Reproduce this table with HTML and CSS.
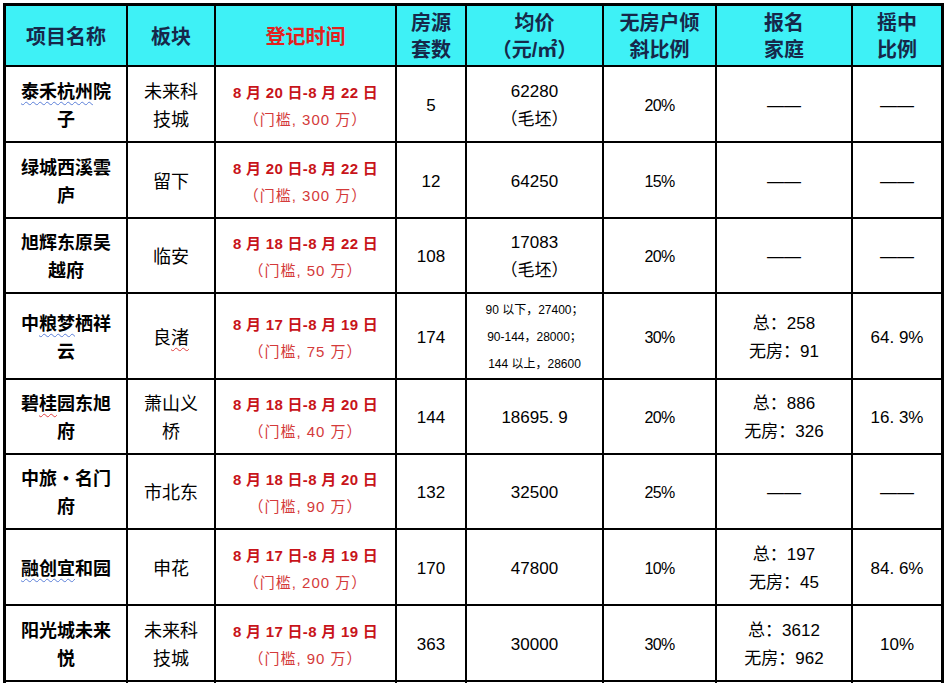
FILE: index.html
```html
<!DOCTYPE html>
<html lang="zh-CN">
<head>
<meta charset="utf-8">
<title>楼盘登记</title>
<link rel="stylesheet" href="styles.css">
</head>
<body>
<table class="sheet">
  <colgroup>
    <col class="c1"><col class="c2"><col class="c3"><col class="c4"><col class="c5"><col class="c6"><col class="c7"><col class="c8">
  </colgroup>
  <thead>
    <tr class="head">
      <th>项目名称</th>
      <th>板块</th>
      <th class="red">登记时间</th>
      <th>房源<br>套数</th>
      <th>均价<br>（元/㎡）</th>
      <th>无房户倾<br>斜比例</th>
      <th>报名<br>家庭</th>
      <th>摇中<br>比例</th>
    </tr>
  </thead>
  <tbody>
    <tr class="r76">
      <td class="name"><span class="wb">泰禾杭州</span>院<br>子</td>
      <td class="area">未来科<br>技城</td>
      <td class="date"><div class="d1">8 月 20 日-8 月 22 日</div><div class="d2">（门槛, 300 万）</div></td>
      <td class="num">5</td>
      <td class="num">62280<br>（毛坯）</td>
      <td class="pct">20%</td>
      <td class="num">——</td>
      <td class="num">——</td>
    </tr>
    <tr class="r76">
      <td class="name">绿城西溪雲<br>庐</td>
      <td class="area">留下</td>
      <td class="date"><div class="d1">8 月 20 日-8 月 22 日</div><div class="d2">（门槛, 300 万）</div></td>
      <td class="num">12</td>
      <td class="num">64250</td>
      <td class="pct">15%</td>
      <td class="num">——</td>
      <td class="num">——</td>
    </tr>
    <tr class="r75">
      <td class="name">旭辉东原吴<br>越府</td>
      <td class="area">临安</td>
      <td class="date"><div class="d1">8 月 18 日-8 月 22 日</div><div class="d2">（门槛, 50 万）</div></td>
      <td class="num">108</td>
      <td class="num">17083<br>（毛坯）</td>
      <td class="pct">20%</td>
      <td class="num">——</td>
      <td class="num">——</td>
    </tr>
    <tr class="r84">
      <td class="name">中<span class="wb">粮梦</span>栖祥<br>云</td>
      <td class="area">良<span class="wr">渚</span></td>
      <td class="date"><div class="d1">8 月 17 日-8 月 19 日</div><div class="d2">（门槛, 75 万）</div></td>
      <td class="num">174</td>
      <td class="small">90 以下，27400；<br>90-144，28000；<br>144 以上，28600</td>
      <td class="pct">30%</td>
      <td class="num">总：258<br>无房：91</td>
      <td class="num">64. 9%</td>
    </tr>
    <tr class="r75">
      <td class="name">碧<span class="wr">桂</span>园东旭<br>府</td>
      <td class="area">萧山义<br>桥</td>
      <td class="date"><div class="d1">8 月 18 日-8 月 20 日</div><div class="d2">（门槛, 40 万）</div></td>
      <td class="num">144</td>
      <td class="num">18695. 9</td>
      <td class="pct">20%</td>
      <td class="num">总：886<br>无房：326</td>
      <td class="num">16. 3%</td>
    </tr>
    <tr class="r75">
      <td class="name">中旅・名门<br>府</td>
      <td class="area">市北东</td>
      <td class="date"><div class="d1">8 月 18 日-8 月 20 日</div><div class="d2">（门槛, 90 万）</div></td>
      <td class="num">132</td>
      <td class="num">32500</td>
      <td class="pct">25%</td>
      <td class="num">——</td>
      <td class="num">——</td>
    </tr>
    <tr class="r76">
      <td class="name"><span class="wb">融创宜</span>和园</td>
      <td class="area">申花</td>
      <td class="date"><div class="d1">8 月 17 日-8 月 19 日</div><div class="d2">（门槛, 200 万）</div></td>
      <td class="num">170</td>
      <td class="num">47800</td>
      <td class="pct">10%</td>
      <td class="num">总：197<br>无房：45</td>
      <td class="num">84. 6%</td>
    </tr>
    <tr class="r76">
      <td class="name">阳光城未来<br>悦</td>
      <td class="area">未来科<br>技城</td>
      <td class="date"><div class="d1">8 月 17 日-8 月 19 日</div><div class="d2">（门槛, 90 万）</div></td>
      <td class="num">363</td>
      <td class="num">30000</td>
      <td class="pct">30%</td>
      <td class="num">总：3612<br>无房：962</td>
      <td class="num">10%</td>
    </tr>
    <tr class="r76">
      <td></td><td></td><td></td><td></td><td></td><td></td><td></td><td></td>
    </tr>
  </tbody>
</table>
</body>
</html>
```

FILE: styles.css
```css
html, body {
  margin: 0;
  padding: 0;
  background: #ffffff;
  overflow: hidden;
}

body {
  font-family: "Liberation Sans", "Noto Sans CJK SC", sans-serif;
  color: #000;
}

.sheet {
  margin: 3px 0 0 3px;
  border-collapse: separate;
  border-spacing: 0;
  table-layout: fixed;
  width: 941px;
  border-top: 3px solid #000;
  border-left: 3px solid #000;
  border-right: 3px solid #000;
}

.c1 { width: 122px; }
.c2 { width: 88px; }
.c3 { width: 181px; }
.c4 { width: 70px; }
.c5 { width: 137px; }
.c6 { width: 113px; }
.c7 { width: 136px; }
.c8 { width: 88px; }

.sheet th,
.sheet td {
  box-sizing: border-box;
  padding: 3px 0 0 0;
  border-right: 2px solid #000;
  border-bottom: 2px solid #000;
  text-align: center;
  vertical-align: middle;
}

.sheet th:last-child,
.sheet td:last-child {
  border-right: none;
}

.head th {
  height: 61px;
  background: #3ef1f6;
  color: #16284a;
  font-size: 20px;
  font-weight: 700;
  line-height: 27px;
}

.head th.red {
  color: #e3211e;
}

.r75 td { height: 75px; }
.r76 td { height: 76px; }
.r84 td { height: 84px; }

.name {
  font-size: 18px;
  font-weight: 700;
  line-height: 28px;
}

.area {
  font-size: 18px;
  line-height: 28px;
}

.date .d1 {
  font-size: 15px;
  font-weight: 700;
  color: #c8141a;
  line-height: 27px;
  letter-spacing: 0.3px;
}

.date .d2 {
  font-size: 15px;
  color: #d43a3a;
  line-height: 27px;
  letter-spacing: 1px;
}

.num {
  font-size: 17px;
  line-height: 28px;
}

.pct {
  font-size: 16px;
  letter-spacing: -0.6px;
}

.small {
  font-size: 12px;
  line-height: 27px;
}

.wb {
  text-decoration: underline wavy #5b7fd8;
  text-decoration-thickness: 1px;
  text-underline-offset: 3px;
}

.wr {
  text-decoration: underline wavy #e04040;
  text-decoration-thickness: 1px;
  text-underline-offset: 3px;
}
```
